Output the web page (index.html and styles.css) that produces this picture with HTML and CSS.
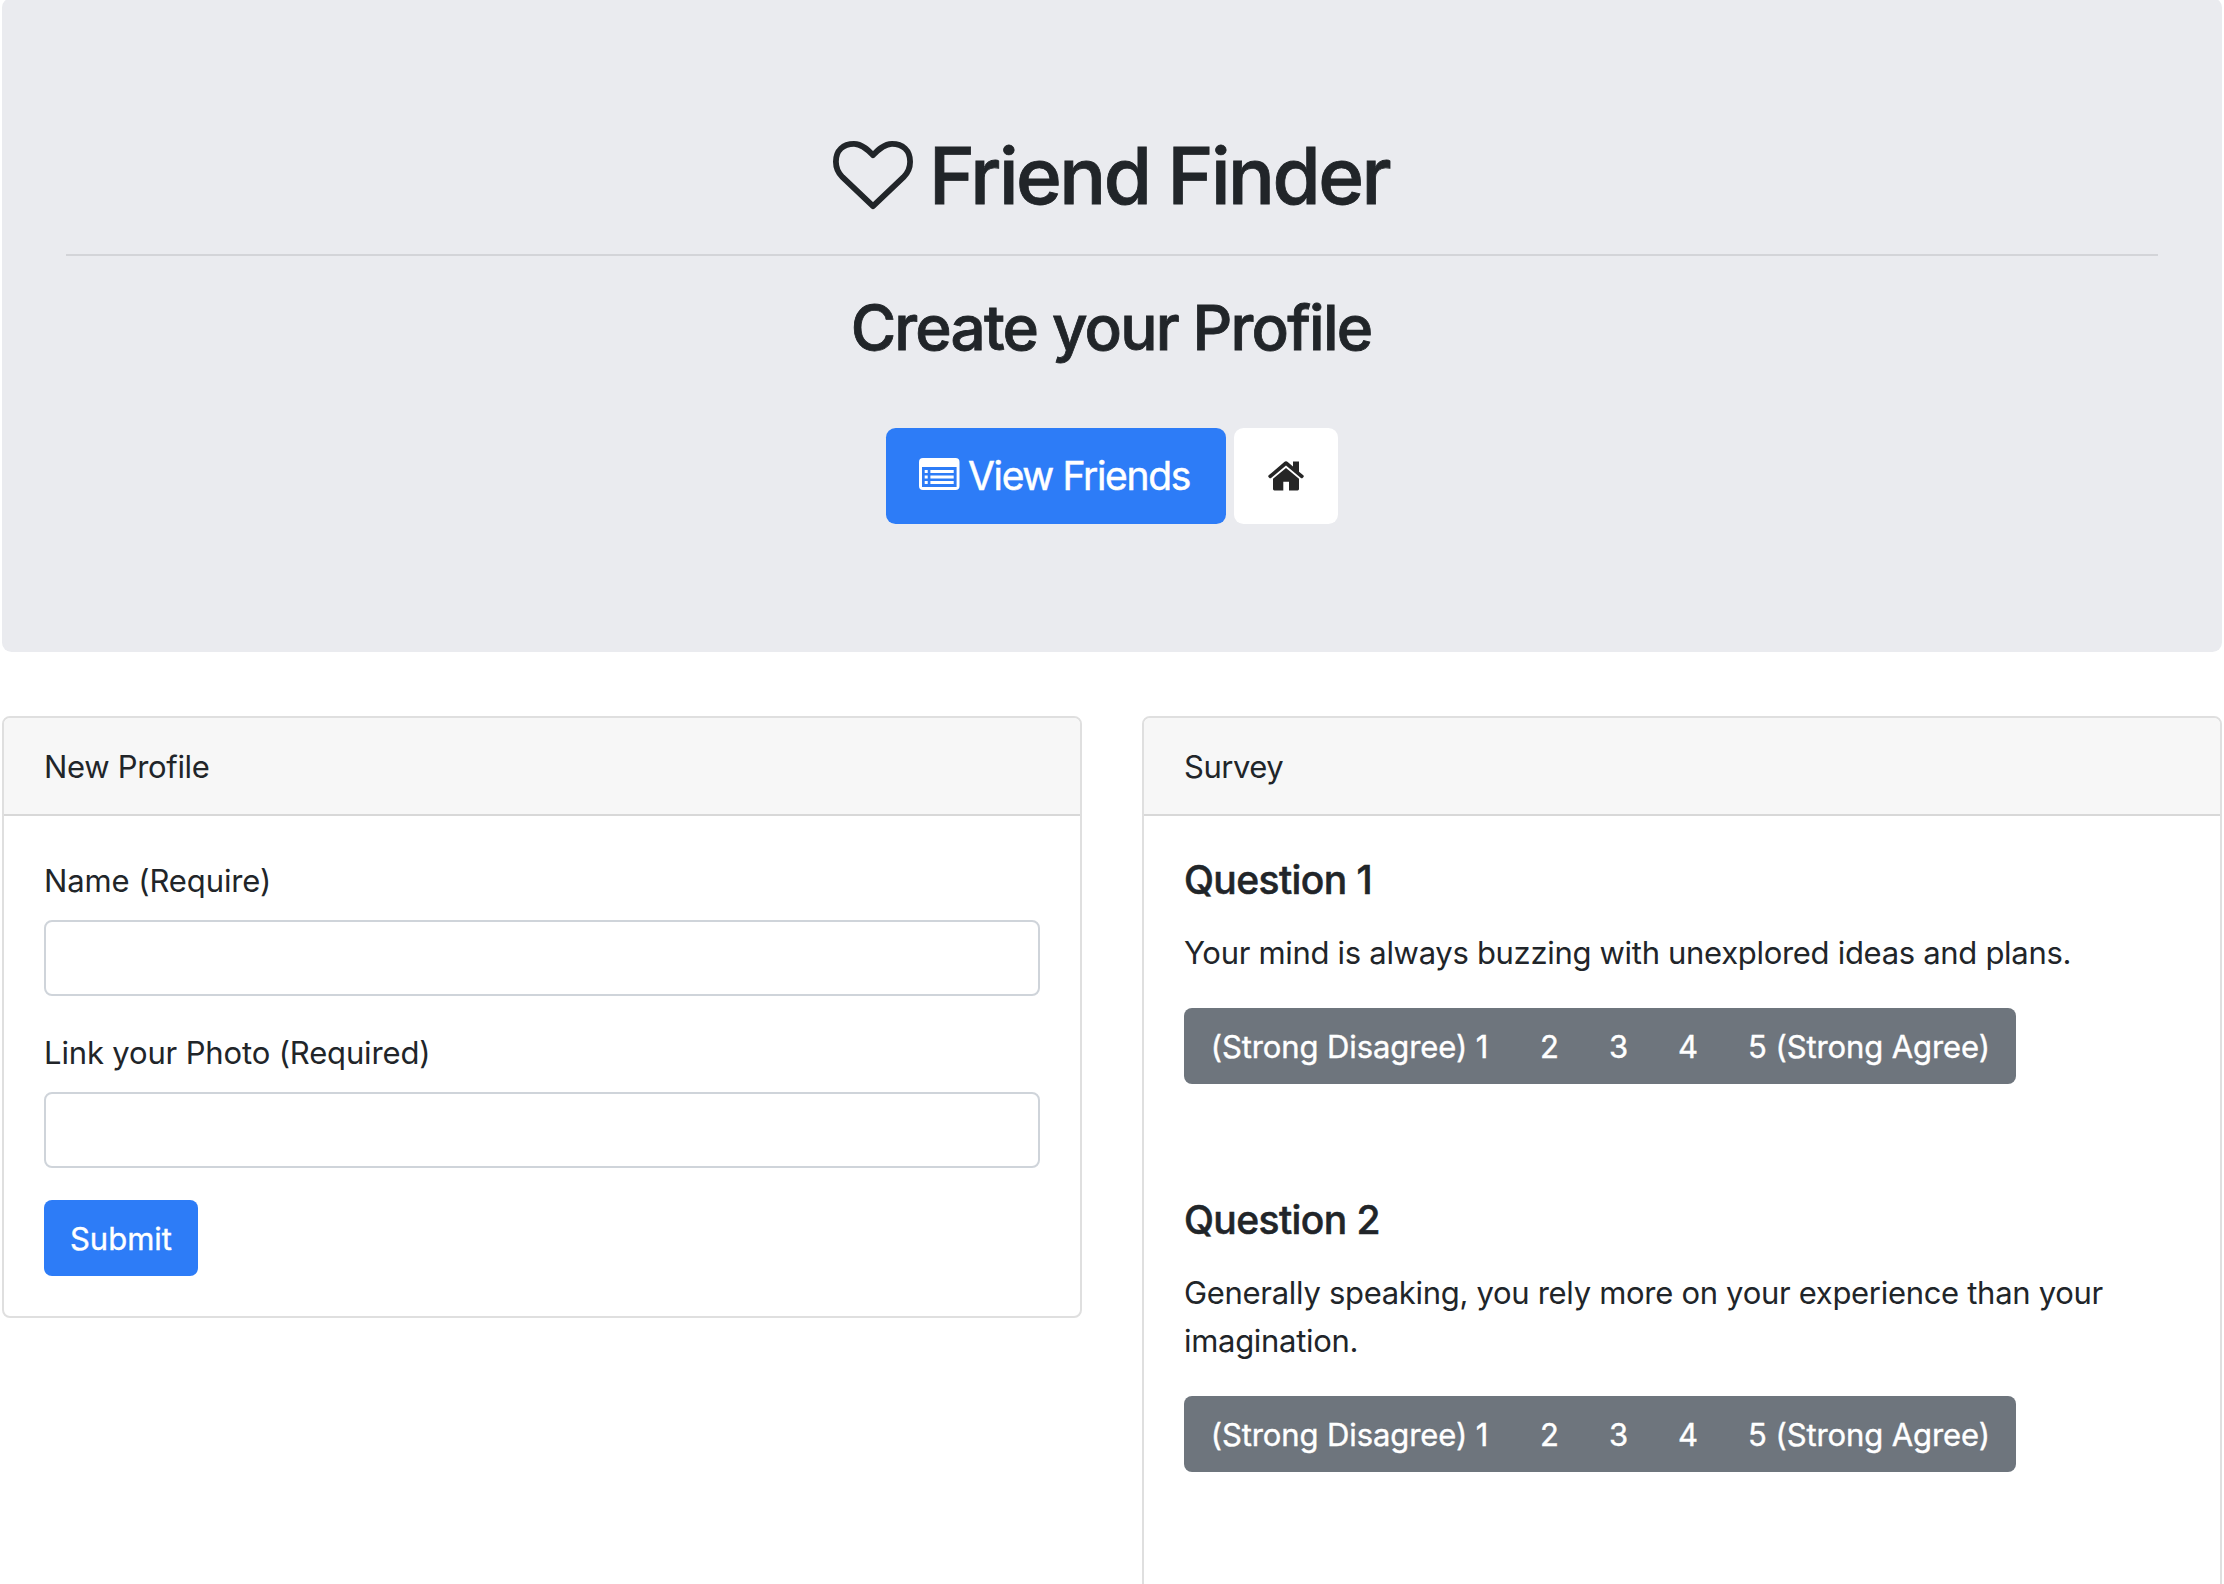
FILE: index.html
```html
<!DOCTYPE html>
<html lang="en">
<head>
<meta charset="utf-8">
<title>Friend Finder</title>
<link rel="stylesheet" href="styles.css">
</head>
<body>
<main class="container">
  <header class="jumbotron">
    <h1 class="title">
      <svg class="icon-heart" viewBox="0 0 80 69" width="80" height="69" aria-hidden="true"><path d="M40 65.2 9.5 36.2C5 31.7 2.9 26.5 2.9 20.7 2.9 9.2 10.2 2.9 21 2.9 29 2.9 35.2 9.3 40 14.2 44.8 9.3 51 2.9 59 2.9 69.8 2.9 77.1 9.2 77.1 20.7 77.1 26.5 75 31.7 70.5 36.2Z" fill="none" stroke="currentColor" stroke-width="5.8" stroke-linejoin="round"/></svg>
      <span class="title-text">Friend Finder</span>
    </h1>
    <hr class="rule">
    <h2 class="subtitle">Create your Profile</h2>
    <nav class="actions">
      <a class="btn btn-lg btn-primary">
        <svg class="icon-list" viewBox="0 0 41 32" width="41" height="32" aria-hidden="true"><path fill="currentColor" fill-rule="evenodd" d="M4 0H36.5Q40.5 0 40.5 4V28Q40.5 32 36.5 32H4Q0 32 0 28V4Q0 0 4 0ZM3 9V29H37.6V9Z"/><path fill="currentColor" d="M5.7 12h3v3h-3zM5.7 17.5h3v3h-3zM5.7 23h3v3h-3zM11.4 12h23.3v3H11.4zM11.4 17.5h23.3v3H11.4zM11.4 23h23.3v3H11.4z"/></svg>
        <span class="btn-lg-text">View Friends</span>
      </a>
      <a class="btn btn-lg btn-home" aria-label="Home">
        <svg class="icon-home" viewBox="0 0 36 30" width="36" height="30" aria-hidden="true"><path fill="currentColor" d="M18 .3Q19 .3 20 1.2L25 5.5V.5H31V10.7L35.3 14.3Q36.3 15.3 35.3 16.3L34.3 17.2Q33.5 17.5 32.6 16.7L18 4.6 3.4 16.7Q2.5 17.5 1.7 17.2L.7 16.3Q-.3 15.3 .7 14.3L16 1.2Q17 .3 18 .3ZM18 7 31 17.7V28Q31 29.4 29.6 29.4H21V20.7H15.3V29.4H6.4Q5 29.4 5 28V17.7Z"/></svg>
      </a>
    </nav>
  </header>

  <div class="columns">
    <section class="card">
      <div class="card-header">New Profile</div>
      <form class="card-body">
        <div class="form-group">
          <label class="label-name" for="name">Name (Require)</label>
          <input class="form-control" id="name" type="text">
        </div>
        <div class="form-group">
          <label for="photo">Link your Photo (Required)</label>
          <input class="form-control" id="photo" type="text">
        </div>
        <button class="btn btn-primary btn-submit" type="button">Submit</button>
      </form>
    </section>

    <section class="card">
      <div class="card-header survey-header">Survey</div>
      <div class="card-body questions">
        <article>
          <h5 class="card-title">Question 1</h5>
          <p class="card-text">Your mind is always buzzing with unexplored ideas and plans.</p>
          <div class="scale">
            <label>(Strong Disagree) 1</label><label>2</label><label>3</label><label>4</label><label>5 (Strong Agree)</label>
          </div>
        </article>
        <article>
          <h5 class="card-title">Question 2</h5>
          <p class="card-text">Generally speaking, you rely more on your experience than your imagination.</p>
          <div class="scale">
            <label>(Strong Disagree) 1</label><label>2</label><label>3</label><label>4</label><label>5 (Strong Agree)</label>
          </div>
        </article>
      </div>
    </section>
  </div>
</main>
</body>
</html>
```
FILE: styles.css
```css
*, *::before, *::after { box-sizing: border-box; }

html { overflow: hidden; }

body {
  margin: 0;
  height: 1584px;
  overflow: hidden;
  background: #fff;
  color: #212529;
  font: 400 31px/48px Inter, "Liberation Sans", sans-serif;
}

h1, h2, h5, p { margin: 0; }

.container {
  margin: -2px 2px 0;
}

.jumbotron {
  height: 654px;
  padding: 128px 64px;
  border-radius: 9.6px;
  background: #eaebef;
  text-align: center;
}

.title {
  display: flex;
  justify-content: center;
  gap: 16px;
  height: 96px;
  padding-right: 2px;
  font-size: 78px;
  font-weight: 500;
  line-height: 96px;
  letter-spacing: -2.55px;
  -webkit-text-stroke: 0.8px currentColor;
}

.icon-heart { margin-top: 15px; }

.title-text { margin-top: 2px; }

.rule {
  height: 2px;
  margin: 32px 0;
  border: 0;
  background: #d3d4d8;
}

.subtitle {
  height: 77px;
  padding: 1px 2px 0 0;
  font-size: 62px;
  font-weight: 500;
  line-height: 77px;
  letter-spacing: -1.81px;
  -webkit-text-stroke: 0.8px currentColor;
}

.actions {
  display: flex;
  justify-content: center;
  gap: 8px;
  margin-top: 63px;
}

.btn {
  display: block;
  border: 0;
  border-radius: 8px;
  font: inherit;
}

.btn-primary {
  background: #2d7cf7;
  color: #fff;
}

.btn-lg {
  display: flex;
  align-items: center;
  height: 96px;
  border-radius: 9.6px;
  font-size: 39px;
  line-height: 60px;
}

.btn-lg.btn-primary {
  width: 340px;
  padding-left: 33px;
  gap: 8px;
}

.icon-list { margin-top: -4px; }

.btn-lg-text {
  letter-spacing: -1.35px;
  white-space: nowrap;
  -webkit-text-stroke: 0.5px currentColor;
}

.btn-home {
  width: 104px;
  justify-content: center;
  background: #fff;
  color: #262626;
}

.columns {
  display: grid;
  grid-template-columns: 1fr 1fr;
  align-items: start;
  gap: 60px;
  margin-top: 64px;
}

.card {
  border: 2px solid #dfdfdf;
  border-radius: 8px;
  background: #fff;
}

.card-header {
  height: 98px;
  padding: 25px 40px 23px;
  border-bottom: 2px solid #d8d8d8;
  border-radius: 6px 6px 0 0;
  background: #f7f7f7;
  letter-spacing: -0.32px;
}

.survey-header { letter-spacing: -0.5px; }

.card-body { padding: 40px; }

.form-group {
  display: flex;
  flex-direction: column;
  gap: 15px;
  margin-bottom: 32px;
  padding-top: 1px;
  letter-spacing: -0.15px;
}

.label-name { letter-spacing: -0.1px; }

.form-control {
  width: 100%;
  height: 76px;
  padding: 12px 24px;
  border: 2px solid #cfd4da;
  border-radius: 8px;
  background: #fff;
  color: #495057;
  font: inherit;
}

.btn-submit {
  width: 154px;
  height: 76px;
  padding: 1px 0 0;
  text-align: center;
  -webkit-text-stroke: 0.4px currentColor;
}

.questions {
  display: flex;
  flex-direction: column;
  gap: 112px;
  padding-bottom: 152px;
}

.card-title {
  margin-bottom: 25px;
  font-size: 39px;
  font-weight: 500;
  line-height: 48px;
  letter-spacing: -0.6px;
  -webkit-text-stroke: 0.5px currentColor;
}

.card-text {
  margin-bottom: 31px;
  letter-spacing: -0.305px;
}

.scale {
  display: grid;
  grid-template-columns: 331px 69px 69px 70px 292px;
  width: 832px;
  height: 76px;
  padding-top: 15px;
  border-radius: 8px;
  background: #6e757d;
  color: #fff;
  text-align: center;
  letter-spacing: -0.1px;
  -webkit-text-stroke: 0.4px currentColor;
}
```
